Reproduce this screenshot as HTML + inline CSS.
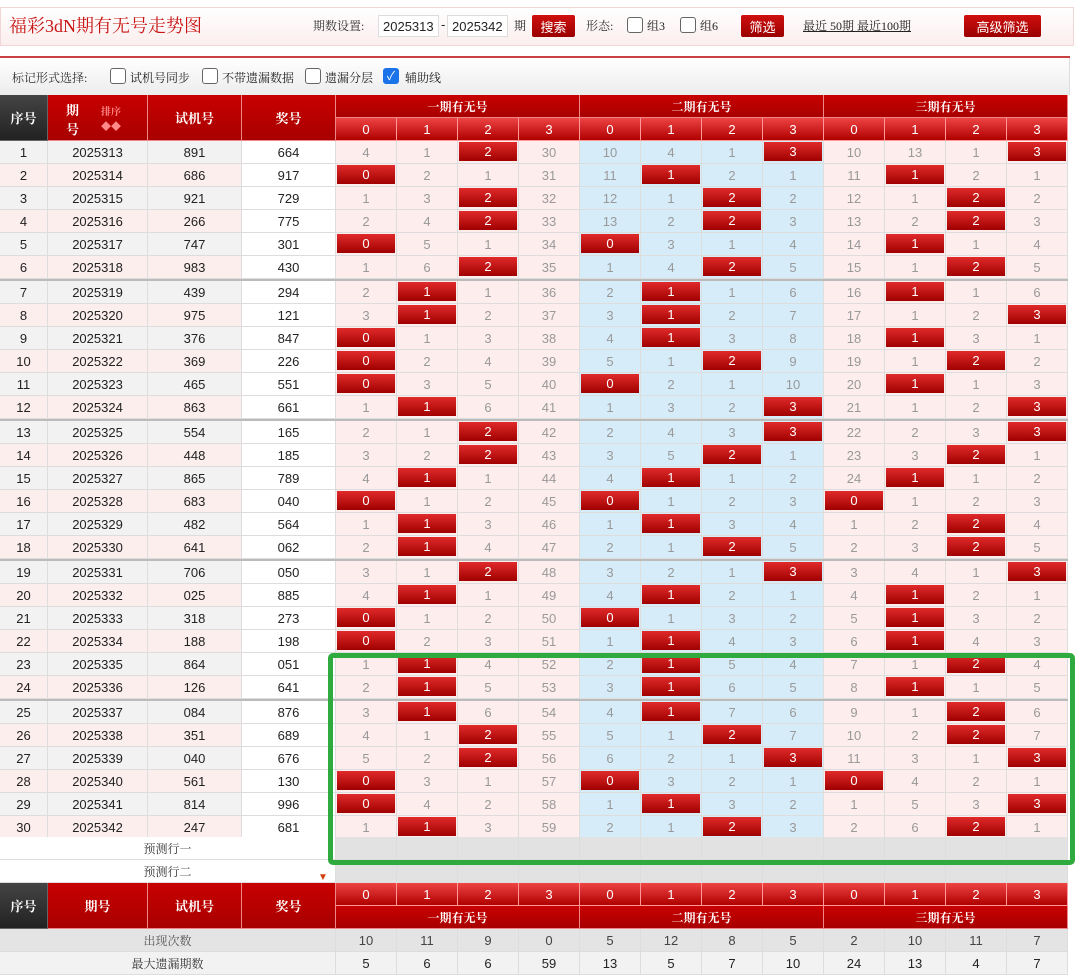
<!DOCTYPE html>
<html><head><meta charset="utf-8">
<style>
*{margin:0;padding:0;box-sizing:border-box}
body{width:1080px;height:970px;background:#fff;position:relative;overflow:hidden;font-family:"Liberation Sans","Noto Sans CJK SC",sans-serif;font-size:13px;color:#222}
.a{position:absolute}
.c{position:absolute;display:flex;align-items:center;justify-content:center;border-right:1px solid #ddd;border-bottom:1px solid #ddd}
.ser{font-family:"Liberation Serif","Noto Serif CJK SC",serif}
.btn{position:absolute;background:linear-gradient(#d01010,#9a0000);color:#fff;font-size:13px;display:flex;align-items:center;justify-content:center;border-radius:2px}
.cb{position:absolute;width:16px;height:16px;border:1px solid #666;border-radius:3px;background:#fff}
.hd{background:linear-gradient(#c80000,#a80000);color:#fff;font-family:"Liberation Serif","Noto Serif CJK SC",serif;font-weight:bold;border-right:1px solid #e88;border-bottom:1px solid #e88}
.sub{background:linear-gradient(#ee4444,#b00000);color:#fff;border-right:1px solid #f99;border-bottom:1px solid #f99}
.hit{position:absolute;left:1px;top:1px;right:1px;bottom:2px;background:linear-gradient(#e02a2a,#a00000);color:#fff;display:flex;align-items:center;justify-content:center}
</style></head><body>
<div class="a" style="left:0;top:7px;width:1074px;height:39px;border:1px solid #f0d6d6;background:linear-gradient(#fff,#fbeeee)"></div>
<div class="a ser" style="left:9px;top:12px;font-size:18px;color:#c81414">福彩3dN期有无号走势图</div>
<div class="a ser" style="left:313px;top:17px;font-size:12px;color:#333">期数设置:</div>
<div class="a" style="left:378px;top:15px;width:61px;height:22px;border:1px solid #ddd;background:#fff;font-size:13px;padding:3px 4px">2025313</div>
<div class="a" style="left:441px;top:17px">-</div>
<div class="a" style="left:447px;top:15px;width:61px;height:22px;border:1px solid #ddd;background:#fff;font-size:13px;padding:3px 4px">2025342</div>
<div class="a ser" style="left:514px;top:17px;font-size:12px">期</div>
<div class="btn" style="left:532px;top:15px;width:43px;height:22px">搜索</div>
<div class="a ser" style="left:586px;top:17px;font-size:12px;color:#333">形态:</div>
<div class="cb" style="left:627px;top:17px"></div><div class="a ser" style="left:647px;top:17px;font-size:12px">组3</div>
<div class="cb" style="left:680px;top:17px"></div><div class="a ser" style="left:700px;top:17px;font-size:12px">组6</div>
<div class="btn" style="left:741px;top:15px;width:43px;height:22px">筛选</div>
<div class="a ser" style="left:803px;top:17px;font-size:12px;text-decoration:underline">最近 50期 最近100期</div>
<div class="btn" style="left:964px;top:15px;width:77px;height:22px">高级筛选</div>
<div class="a" style="left:0;top:56px;width:1070px;height:2px;background:#c84040"></div>
<div class="a" style="left:0;top:58px;width:1070px;height:37px;background:linear-gradient(#fff,#ececec);border-right:1px solid #ddd"></div>
<div class="a ser" style="left:12px;top:69px;font-size:12px;color:#333">标记形式选择:</div>
<div class="cb" style="left:110px;top:68px"></div><div class="a ser" style="left:130px;top:69px;font-size:12px">试机号同步</div>
<div class="cb" style="left:202px;top:68px"></div><div class="a ser" style="left:222px;top:69px;font-size:12px">不带遗漏数据</div>
<div class="cb" style="left:305px;top:68px"></div><div class="a ser" style="left:325px;top:69px;font-size:12px">遗漏分层</div>
<div class="cb" style="left:383px;top:68px;background:#1a73e8;border-color:#1a73e8;color:#fff;font-size:12px;line-height:14px;text-align:center">✓</div><div class="a ser" style="left:405px;top:69px;font-size:12px">辅助线</div>
<div id="t"></div>
<div class="a" style="left:328px;top:653px;width:747px;height:212px;border:5px solid #2eaa3e;border-radius:5px"></div>
<script>
var X=[0,48,148,242,336];for(var i=1;i<=12;i++)X.push(336+i*61);
var h='';
function cell(x,y,w,hh,cls,st,txt){h+='<div class="c '+cls+'" style="left:'+x+'px;top:'+y+'px;width:'+w+'px;height:'+hh+'px;'+st+'">'+txt+'</div>';}
cell(0,95,48,46,'hd','background:linear-gradient(#444,#222);border-color:#666','序号');
cell(48,95,100,46,'hd','','<span style="position:absolute;left:18px;top:5px">期</span><span style="position:absolute;left:18px;top:24px">号</span><span style="position:absolute;left:53px;top:8px;font-size:10px;color:#f88">排序<br>◆◆</span>');
cell(148,95,94,46,'hd','','试机号');cell(242,95,94,46,'hd','','奖号');
var G=['一期有无号','二期有无号','三期有无号'];
for(var g=0;g<3;g++){cell(X[4+g*4],95,244,23,'hd','font-size:12px',G[g]);for(var k=0;k<4;k++)cell(X[4+g*4+k],118,61,23,'sub','',k);}
var S=[891,686,921,266,747,983,439,975,376,369,465,863,554,448,865,683,482,641,706,'025',318,188,864,126,'084',351,'040',561,814,247];
var J=[664,917,729,775,301,430,294,121,847,226,551,661,165,185,789,'040',564,'062','050',885,273,198,'051',641,876,689,676,130,996,681];
var H=[[2,3,3],[0,1,1],[2,2,2],[2,2,2],[0,0,1],[2,2,2],[1,1,1],[1,1,3],[0,1,1],[0,2,2],[0,0,1],[1,3,3],[2,3,3],[2,2,2],[1,1,1],[0,0,0],[1,1,2],[1,2,2],[2,3,3],[1,1,1],[0,0,1],[0,1,1],[1,1,2],[1,1,1],[1,1,2],[2,2,2],[2,3,3],[0,0,0],[0,1,3],[1,2,2]];
var om=[[4,1,2,30],[10,4,1,3],[10,13,1,3]];
var y=141;
for(var r=0;r<30;r++){
 if(r>0&&r%6==0){h+='<div class="a" style="left:0;top:'+y+'px;width:1068px;height:2px;background:#bbb"></div>';y+=2;}
 var bg=r%2==0?'#f2f2f2':'#fdeeee';
 cell(0,y,48,23,'','background:'+bg,r+1);cell(48,y,100,23,'','background:'+bg,2025313+r);
 cell(148,y,94,23,'','background:'+bg,S[r]);cell(242,y,94,23,'','background:#fff',J[r]);
 for(var g=0;g<3;g++){var hit=H[r][g];for(var k=0;k<4;k++){
  if(r>0){om[g][k]=(k==hit)?0:om[g][k]+1;}
  var cb=g==1?'#d6ecf9':'#fdeded';
  var txt=(k==hit)?'<div class="hit">'+k+'</div>':'<span style="color:#999">'+om[g][k]+'</span>';
  if(r==0&&k==hit)om[g][k]=0;
  cell(X[4+g*4+k],y,61,23,'','background:'+cb,txt);}}
 y+=23;}
y-=2;
['预测行一','预测行二'].forEach(function(t,i){cell(0,y,336,23,'ser','background:#fff;font-size:12px;color:#333',t);for(var k=0;k<12;k++)cell(X[4+k],y,61,23,'','background:#e2e2e2','');y+=23;});
h+='<div class="a" style="left:318px;top:'+(y-11)+'px;color:#d04010;font-size:10px">▼</div>';
cell(0,y,48,46,'hd','background:linear-gradient(#444,#222);border-color:#666','序号');
cell(48,y,100,46,'hd','','期号');cell(148,y,94,46,'hd','','试机号');cell(242,y,94,46,'hd','','奖号');
for(var g=0;g<3;g++){for(var k=0;k<4;k++)cell(X[4+g*4+k],y,61,23,'sub','',k);cell(X[4+g*4],y+23,244,23,'hd','font-size:12px',G[g]);}
y+=46;
var A=[10,11,9,0,5,12,8,5,2,10,11,7],M=[5,6,6,59,13,5,7,10,24,13,4,7];
cell(0,y,336,23,'ser','background:#e4e4e4;font-size:12px;color:#555','出现次数');for(var k=0;k<12;k++)cell(X[4+k],y,61,23,'','background:#e4e4e4;color:#444',A[k]);y+=23;
cell(0,y,336,23,'ser','background:#f2f2f2;font-size:12px;color:#333','最大遗漏期数');for(var k=0;k<12;k++)cell(X[4+k],y,61,23,'','background:#f2f2f2',M[k]);
document.getElementById('t').innerHTML=h;
</script>
</body></html>
